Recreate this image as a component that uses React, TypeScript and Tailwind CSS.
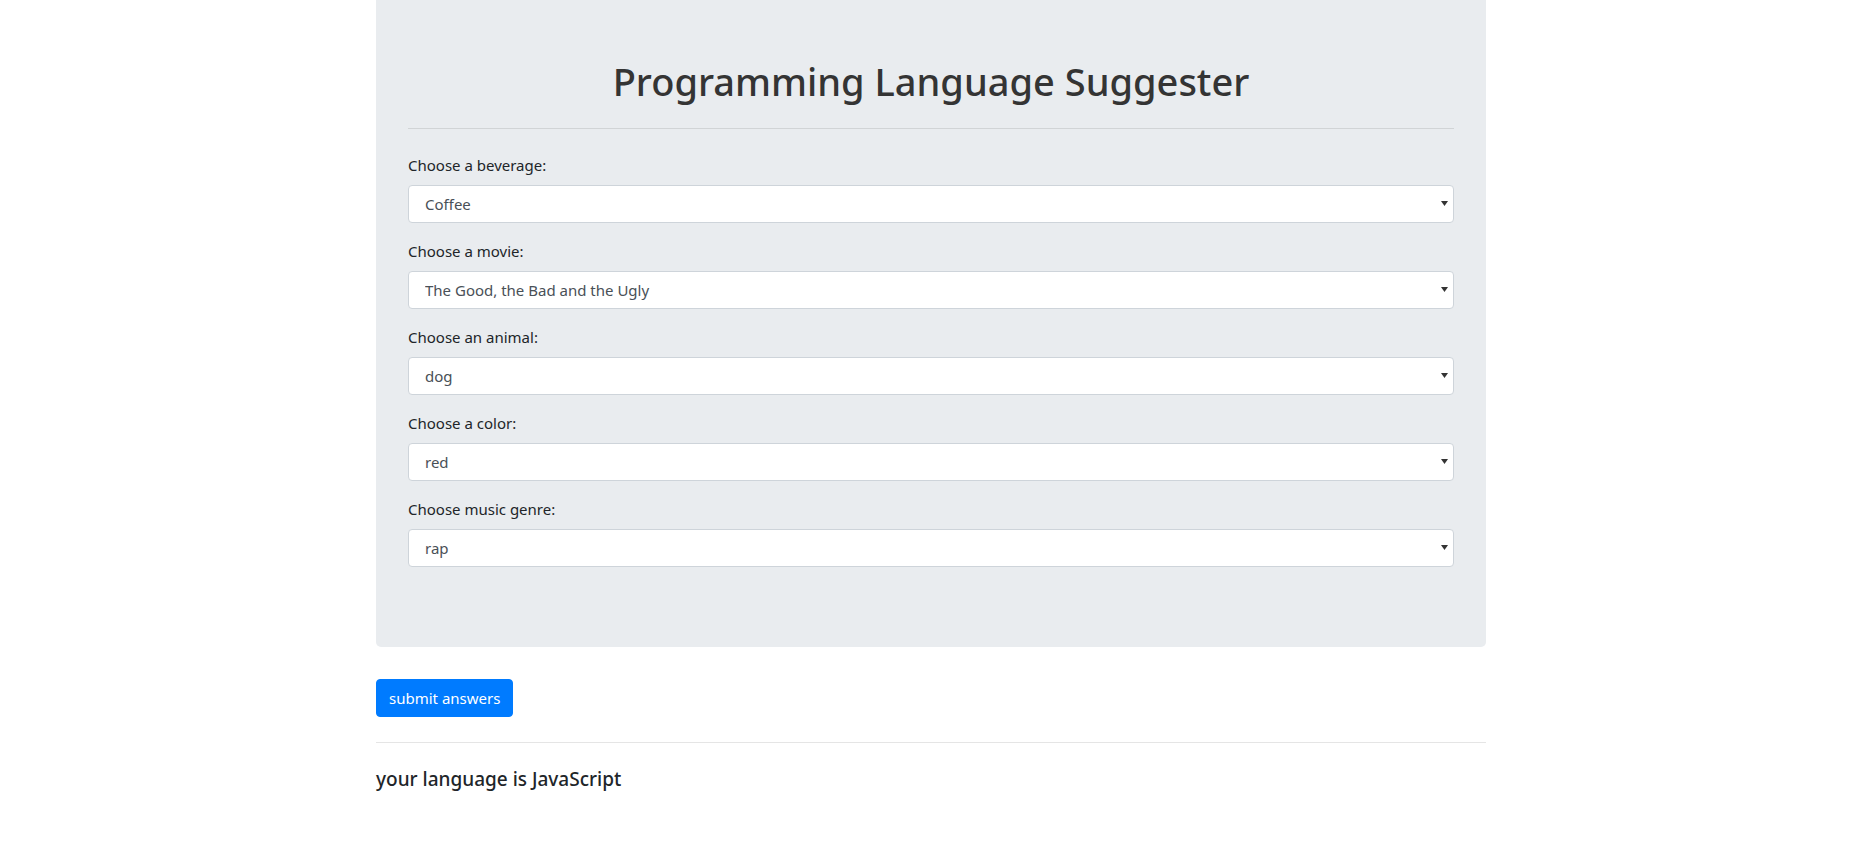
const questions: { label: string; value: string; options: string[] }[] = [
  { label: 'Choose a beverage:', value: 'Coffee', options: ['Coffee', 'Tea', 'Juice'] },
  { label: 'Choose a movie:', value: 'The Good, the Bad and the Ugly', options: ['The Good, the Bad and the Ugly', 'The Matrix', 'Inception'] },
  { label: 'Choose an animal:', value: 'dog', options: ['dog', 'cat', 'bird'] },
  { label: 'Choose a color:', value: 'red', options: ['red', 'green', 'blue'] },
  { label: 'Choose music genre:', value: 'rap', options: ['rap', 'rock', 'jazz'] },
];

const Field = ({ label, value, options }: { label: string; value: string; options: string[] }) => (
  <div className="mb-4">
    <label className="block mb-2 text-[15px] leading-6 text-[#212529]">{label}</label>
    <div className="relative">
      <select
        defaultValue={value}
        className="block w-full h-[38px] appearance-none rounded-[4px] border border-[#ced4da] bg-white pl-[16px] pr-8 text-[15px] leading-6 text-[#495057] outline-none"
      >
        {options.map(o => (
          <option key={o} value={o}>{o}</option>
        ))}
      </select>
      <svg className="pointer-events-none absolute right-[6px] top-[16px]" width="7" height="5" viewBox="0 0 7 5">
        <path d="M0 0h7L3.5 5z" fill="#333" />
      </svg>
    </div>
  </div>
);

export default function App() {
  return (
    <div className="min-h-screen bg-white" style={{ fontFamily: '"Segoe UI", "Noto Sans", "Open Sans", sans-serif' }}>
      <div className="flex justify-center pr-[6px]">
        <div className="w-[1110px]">
          <div className="bg-[#e9ecef] rounded-b-[5px] px-8 pt-16 pb-16">
            <h1 className="text-center text-[38px] leading-[34px] font-medium text-[#343434]">Programming Language Suggester</h1>
            <hr className="mt-[30px] mb-6 border-0 border-t border-[rgba(0,0,0,0.1)]" />
            <form onSubmit={e => e.preventDefault()}>
              {questions.map(q => (
                <Field key={q.label} {...q} />
              ))}
            </form>
          </div>
          <button className="mt-8 h-[38px] px-3 rounded-[4px] bg-[#007bff] text-white text-[15px] leading-6 border border-[#007bff]">
            submit answers
          </button>
          <hr className="mt-[25px] border-0 border-t border-[rgba(0,0,0,0.1)]" />
          <h5 className="mt-[25px] text-[19px] leading-[1.2] font-medium text-[#212529]">your language is JavaScript</h5>
        </div>
      </div>
    </div>
  );
}
